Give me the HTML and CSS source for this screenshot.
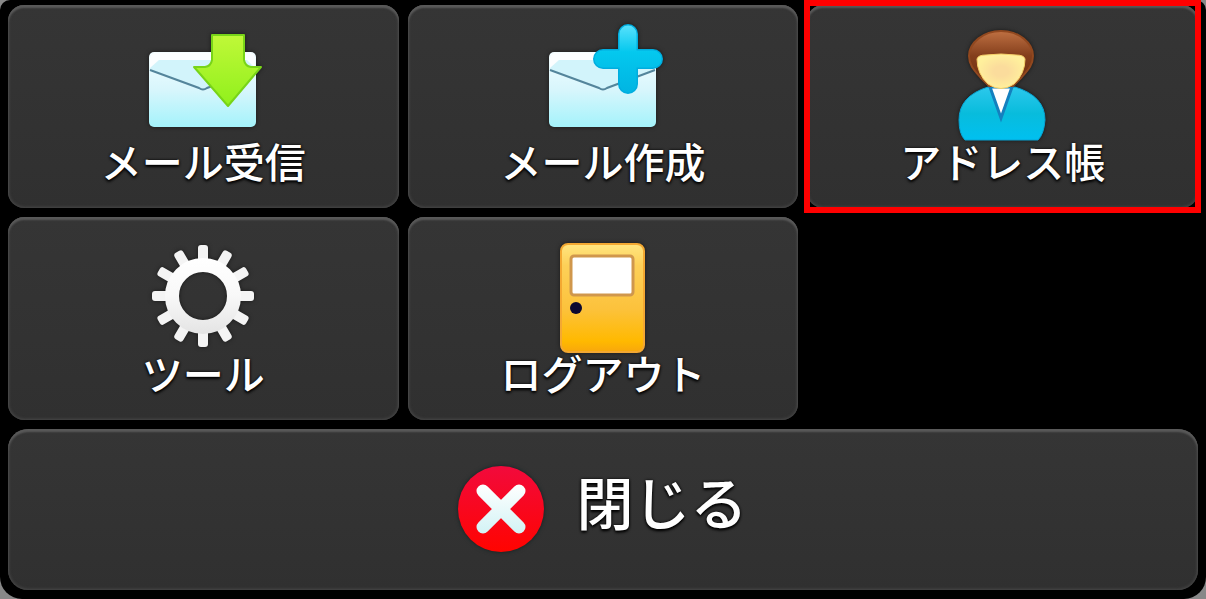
FILE: index.html
```html
<!DOCTYPE html>
<html lang="ja">
<head>
     <meta charset="UTF-8">
     <meta name="viewport" content="width=device-width, initial-scale=1">
     <title>メニュー</title>
     <link rel="stylesheet" href="styles.css">
</head>
<body>
     <div id="menu">
          <button type="button" class="item">
               <svg class="icon" viewBox="0 0 120 120" aria-hidden="true">
                    <defs>
                         <linearGradient id="paper" x1="0" y1="0" x2="0" y2="1">
                              <stop offset="0" stop-color="#f4fdff"/>
                              <stop offset="0.5" stop-color="#d8f6fc"/>
                              <stop offset="1" stop-color="#a4f3fb"/>
                         </linearGradient>
                         <linearGradient id="green" x1="0" y1="0" x2="0" y2="1">
                              <stop offset="0" stop-color="#c0f838"/>
                              <stop offset="1" stop-color="#90f01c"/>
                         </linearGradient>
                    </defs>
                    <rect x="6" y="30" width="107" height="75" rx="5" fill="url(#paper)"/>
                    <path d="M7 36V47L60 68L112 47V36Q112 31 107 31H12Q7 31 7 36Z" fill="#d2f4fb"/>
                    <path d="M7 46V36Q7 31 12 31H107Q112 31 112 36V46L104 38H16Z" fill="#fbfeff"/>
                    <path d="M7 48L56 66Q60 69 64 66L112 48" fill="none" stroke="#54859b" stroke-width="2"/>
                    <path d="M69 13H101V38Q102 44 108 45H118L85 84L51 45H62Q68 44 69 38Z" fill="url(#green)" stroke="#78d418" stroke-width="2" stroke-linejoin="round"/>
               </svg>
               <span class="label">メール受信</span>
          </button>
          <button type="button" class="item">
               <svg class="icon" viewBox="0 0 120 120" aria-hidden="true">
                    <defs>
                         <linearGradient id="plus" x1="0" y1="2" x2="0" y2="72" gradientUnits="userSpaceOnUse">
                              <stop offset="0" stop-color="#5ce2fc"/>
                              <stop offset="0.4" stop-color="#04c8ee"/>
                              <stop offset="1" stop-color="#00b4e2"/>
                         </linearGradient>
                    </defs>
                    <rect x="6" y="30" width="107" height="75" rx="5" fill="url(#paper)"/>
                    <path d="M7 36V47L60 68L112 47V36Q112 31 107 31H12Q7 31 7 36Z" fill="#d2f4fb"/>
                    <path d="M7 46V36Q7 31 12 31H107Q112 31 112 36V46L104 38H16Z" fill="#fbfeff"/>
                    <path d="M7 48L56 66Q60 69 64 66L112 48" fill="none" stroke="#54859b" stroke-width="2"/>
                    <g fill="none" stroke-linecap="round">
                         <path d="M85 12V62M60 37H110" stroke="#00addf" stroke-width="20"/>
                         <path d="M85 12V62M60 37H110" stroke="url(#plus)" stroke-width="17"/>
                    </g>
               </svg>
               <span class="label">メール作成</span>
          </button>
          <button type="button" class="item current">
               <svg class="icon" viewBox="0 0 120 120" aria-hidden="true">
                    <defs>
                         <linearGradient id="hair" x1="0" y1="0" x2="0" y2="1">
                              <stop offset="0" stop-color="#bf7042"/>
                              <stop offset="0.45" stop-color="#843f1c"/>
                              <stop offset="1" stop-color="#6c2c0e"/>
                         </linearGradient>
                         <radialGradient id="face">
                              <stop offset="0.3" stop-color="#fbdc9c"/>
                              <stop offset="1" stop-color="#fff09c"/>
                         </radialGradient>
                         <linearGradient id="suit" x1="0" y1="0" x2="0" y2="1">
                              <stop offset="0" stop-color="#2cc8ec"/>
                              <stop offset="0.5" stop-color="#08bcdc"/>
                              <stop offset="1" stop-color="#00c0f0"/>
                         </linearGradient>
                    </defs>
                    <path d="M45 65Q58 68 72 65Q102 74 102 98Q101 112 95 118H22Q16 112 16 98Q16 74 45 65Z" fill="url(#suit)" stroke="#08a5d5" stroke-width="1"/>
                    <path d="M47 65L58 96L69 65Z" fill="#ffffff" stroke="#1480be" stroke-width="3"/>
                    <path d="M58 9C76 9 90 21 90 34C90 43 85 48 78 56L70 64H46L38 56C31 48 26 43 26 34C26 21 40 9 58 9Z" fill="url(#hair)" stroke="#91481f" stroke-width="2"/>
                    <path d="M34 37Q35 33 43 33Q58 31 73 33Q81 33 82 37Q82 52 71 62Q58 71 45 62Q34 52 34 37Z" fill="url(#face)" stroke="#f5cf67" stroke-width="1"/>
               </svg>
               <span class="label">アドレス帳</span>
          </button>
          <button type="button" class="item">
               <svg class="icon" viewBox="0 0 120 120" aria-hidden="true">
                    <defs>
                         <linearGradient id="metal" x1="0" y1="24" x2="0" y2="100" gradientUnits="userSpaceOnUse">
                              <stop offset="0" stop-color="#ffffff"/>
                              <stop offset="0.5" stop-color="#f8f8f8"/>
                              <stop offset="1" stop-color="#e4e4e4"/>
                         </linearGradient>
                         <rect id="tooth" x="55" y="11" width="10" height="18" rx="3"/>
                    </defs>
                    <!-- 歯車の歯 12本 -->
                    <g fill="#f4f4f4">
                         <use href="#tooth"/>
                         <use href="#tooth" transform="rotate(30 60 62)"/>
                         <use href="#tooth" transform="rotate(60 60 62)"/>
                         <use href="#tooth" transform="rotate(90 60 62)"/>
                         <use href="#tooth" transform="rotate(120 60 62)"/>
                         <use href="#tooth" transform="rotate(150 60 62)"/>
                         <use href="#tooth" transform="rotate(180 60 62)"/>
                         <use href="#tooth" transform="rotate(210 60 62)"/>
                         <use href="#tooth" transform="rotate(240 60 62)"/>
                         <use href="#tooth" transform="rotate(270 60 62)"/>
                         <use href="#tooth" transform="rotate(300 60 62)"/>
                         <use href="#tooth" transform="rotate(330 60 62)"/>
                    </g>
                    <circle cx="60" cy="62" r="31" fill="none" stroke="url(#metal)" stroke-width="14"/>
               </svg>
               <span class="label">ツール</span>
          </button>
          <button type="button" class="item">
               <svg class="icon" viewBox="0 0 120 120" aria-hidden="true">
                    <defs>
                         <linearGradient id="door" x1="0" y1="0" x2="0" y2="1">
                              <stop offset="0" stop-color="#ffe580"/>
                              <stop offset="0.2" stop-color="#fdd058"/>
                              <stop offset="0.6" stop-color="#fcc23c"/>
                              <stop offset="0.9" stop-color="#ffb900"/>
                              <stop offset="1" stop-color="#f8a70c"/>
                         </linearGradient>
                    </defs>
                    <rect x="18" y="10" width="83" height="108" rx="7" fill="url(#door)" stroke="#f3a832" stroke-width="2"/>
                    <rect x="28" y="22" width="62" height="39" rx="3" fill="#ffffff" stroke="#d0974c" stroke-width="3"/>
                    <circle cx="33" cy="74" r="6" fill="#0c0830"/>
               </svg>
               <span class="label">ログアウト</span>
          </button>
          <button type="button" class="close">
               <svg class="close-icon" viewBox="0 0 86 86" aria-hidden="true">
                    <defs>
                         <linearGradient id="red" x1="0" y1="0" x2="0" y2="1">
                              <stop offset="0" stop-color="#f20a3c"/>
                              <stop offset="1" stop-color="#ff0400"/>
                         </linearGradient>
                         <linearGradient id="cross" x1="0" y1="18" x2="0" y2="68" gradientUnits="userSpaceOnUse">
                              <stop offset="0" stop-color="#ffffff"/>
                              <stop offset="1" stop-color="#d2f3f5"/>
                         </linearGradient>
                    </defs>
                    <circle cx="43" cy="43" r="43" fill="url(#red)"/>
                    <path d="M25 25L61 61M61 25L25 61" fill="none" stroke="url(#cross)" stroke-width="13" stroke-linecap="round"/>
               </svg>
               <span class="close-label">閉じる</span>
          </button>
     </div>
</body>
</html>
```
FILE: styles.css
```css
body{
     margin: 0;
     background: #888;
     font-family: "Noto Sans CJK JP", sans-serif;
}
#menu{
     box-sizing: border-box;
     min-height: 100vh;
     padding: 5px 8px 9px;
     display: grid;
     grid-template-columns: repeat(3, 1fr);
     align-content: start;
     gap: 9px;
     background: #000;
     border-radius: 10px 10px 22px 22px;
}
button{
     margin: 0;
     border: 0;
     color: #fff;
     font-family: inherit;
     font-weight: 500;
     text-shadow: 0 0 3px #000, 0 2px 3px #000;
     background: linear-gradient(#353535, #303030);
     box-shadow: inset 0 3px 2px #595959, inset 0 0 3px 1px #484848;
     cursor: pointer;
}
.item{
     position: relative;
     display: flex;
     flex-direction: column;
     align-items: center;
     padding: 17px 0 30px;
     border-radius: 16px;
}
.icon{
     width: 120px;
     height: 120px;
     filter: drop-shadow(0 0 2px #181818);
}
.label{
     position: relative;
     font-size: 41px;
     line-height: 36px;
     white-space: nowrap;
}
/* 選択中の項目を囲む赤枠 */
.current::after{
     content: "";
     position: absolute;
     inset: -5px -3px;
     border: 6px solid #f00;
}
.close{
     grid-column: 1 / -1;
     display: flex;
     justify-content: center;
     align-items: center;
     gap: 32px;
     padding: 37px 0 38px;
     border-radius: 20px;
}
.close-icon{
     width: 86px;
     height: 86px;
     filter: drop-shadow(0 0 2px #122);
}
.close-label{
     padding-bottom: 18px;
     font-size: 57px;
     line-height: 64px;
}
```
